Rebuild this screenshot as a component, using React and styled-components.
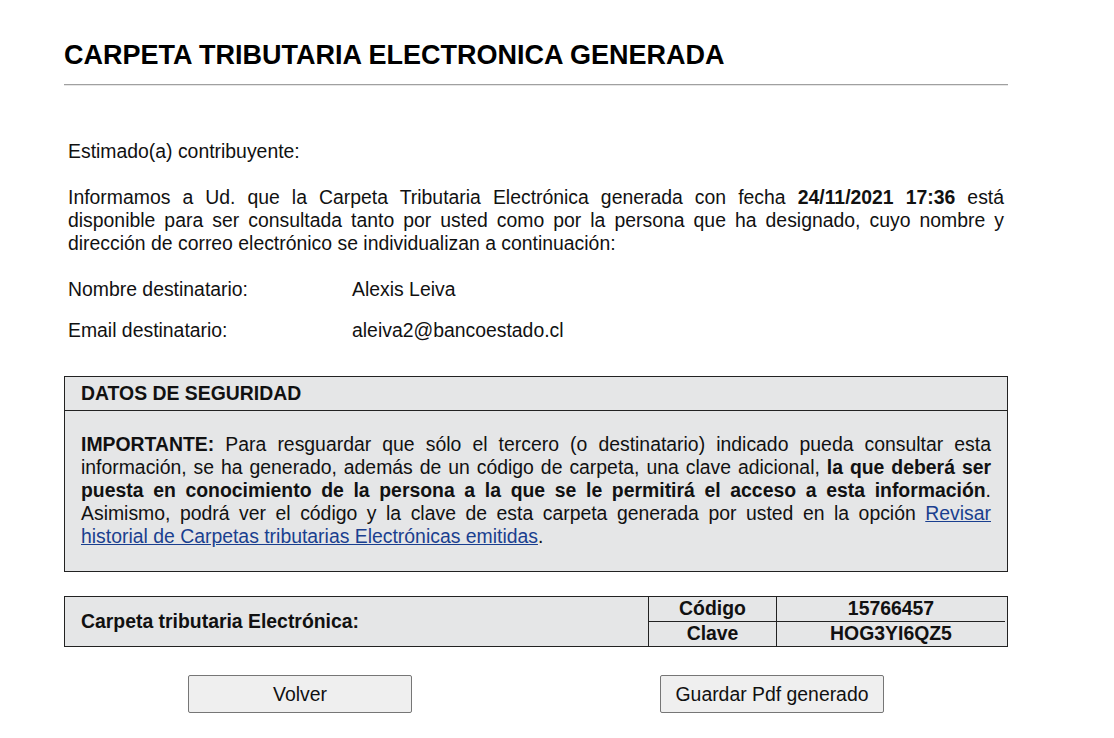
import styled, { createGlobalStyle } from "styled-components";

const Global = createGlobalStyle`
body {
  margin: 0;
  background: #fff;
  font-family: "Liberation Sans", Arial, sans-serif;
  color: #111;
}
`

const App = () => {
    return (
    <Page>
        <Global />
        <Title>CARPETA TRIBUTARIA ELECTRONICA GENERADA</Title>
        <Rule />
        <Body>
            <P>Estimado(a) contribuyente:</P>
            <P>
                Informamos a Ud. que la Carpeta Tributaria Electrónica generada con fecha <b>24/11/2021 17:36</b> está
                disponible para ser consultada tanto por usted como por la persona que ha designado, cuyo nombre y
                dirección de correo electrónico se individualizan a continuación:
            </P>
            <Row>
                <span>Nombre destinatario:</span>
                <span>Alexis Leiva</span>
            </Row>
            <Row>
                <span>Email destinatario:</span>
                <span>aleiva2@bancoestado.cl</span>
            </Row>
        </Body>
        <Box>
            <BoxHead>DATOS DE SEGURIDAD</BoxHead>
            <BoxText>
                <b>IMPORTANTE:</b> Para resguardar que sólo el tercero (o destinatario) indicado pueda consultar esta
                información, se ha generado, además de un código de carpeta, una clave adicional, <b>la que deberá ser
                puesta en conocimiento de la persona a la que se le permitirá el acceso a esta información</b>.
                Asimismo, podrá ver el código y la clave de esta carpeta generada por usted en la opción <A href="#">Revisar
                historial de Carpetas tributarias Electrónicas emitidas</A>.
            </BoxText>
        </Box>
        <Codes>
            <CodesLabel>Carpeta tributaria Electrónica:</CodesLabel>
            <Inner>
                <Cell>Código</Cell>
                <Cell last>15766457</Cell>
                <Cell bottom>Clave</Cell>
                <Cell bottom last>HOG3YI6QZ5</Cell>
            </Inner>
        </Codes>
        <Buttons>
            <Slot><Button>Volver</Button></Slot>
            <Slot><Button>Guardar Pdf generado</Button></Slot>
        </Buttons>
    </Page>
    )
}

export default App;

const Page = styled.div`
width: 944px;
padding: 0 0 0 64px;
`

const Title = styled.h1`
margin: 0;
padding-top: 40px;
font-size: 27px;
line-height: 30px;
font-weight: bold;
color: #000;
`

const Rule = styled.div`
margin-top: 14px;
height: 1px;
background: #a0a0a0;
border-bottom: 1px solid #e6e6e6;
`

const Body = styled.div`
padding: 0 4px;
font-size: 19.4px;
line-height: 23px;
margin-top: 54px;
`

const P = styled.p`
margin: 0 0 23px 0;
text-align: justify;
`

const Row = styled.div`
display: grid;
grid-template-columns: 284px 1fr;
margin-bottom: 18px;
`

const Box = styled.div`
margin-top: 34px;
height: 194px;
border: 1px solid #222;
background: #e5e6e7;
font-size: 19.4px;
line-height: 23px;
`

const BoxHead = styled.div`
font-weight: bold;
padding: 5px 16px 5px;
border-bottom: 1px solid #222;
`

const BoxText = styled.p`
margin: 22px 16px 0;
text-align: justify;
`

const A = styled.a`
color: #1a3f8f;
text-decoration: underline;
`

const Codes = styled.div`
margin-top: 24px;
display: grid;
grid-template-columns: 583px 1fr;
border: 1px solid #222;
background: #e5e6e7;
height: 49px;
font-size: 19.4px;
font-weight: bold;
`

const CodesLabel = styled.div`
display: flex;
align-items: center;
padding-left: 16px;
`

const Inner = styled.div`
display: grid;
grid-template-columns: 128px 1fr;
grid-template-rows: 1fr 1fr;
border-left: 1px solid #222;
margin-right: 2px;
`

const Cell = styled.div`
text-align: center;
line-height: 23px;
border-right: ${p => (p.last ? "none" : "1px solid #222")};
border-bottom: ${p => (p.bottom ? "none" : "1px solid #222")};
`

const Buttons = styled.div`
display: grid;
grid-template-columns: 1fr 1fr;
margin-top: 28px;
`

const Slot = styled.div`
display: flex;
justify-content: center;
`

const Button = styled.button`
width: 224px;
height: 38px;
background: #efefef;
border: 1px solid #767676;
border-radius: 2px;
font-family: "Liberation Sans", Arial, sans-serif;
font-size: 19.4px;
color: #111;
`
